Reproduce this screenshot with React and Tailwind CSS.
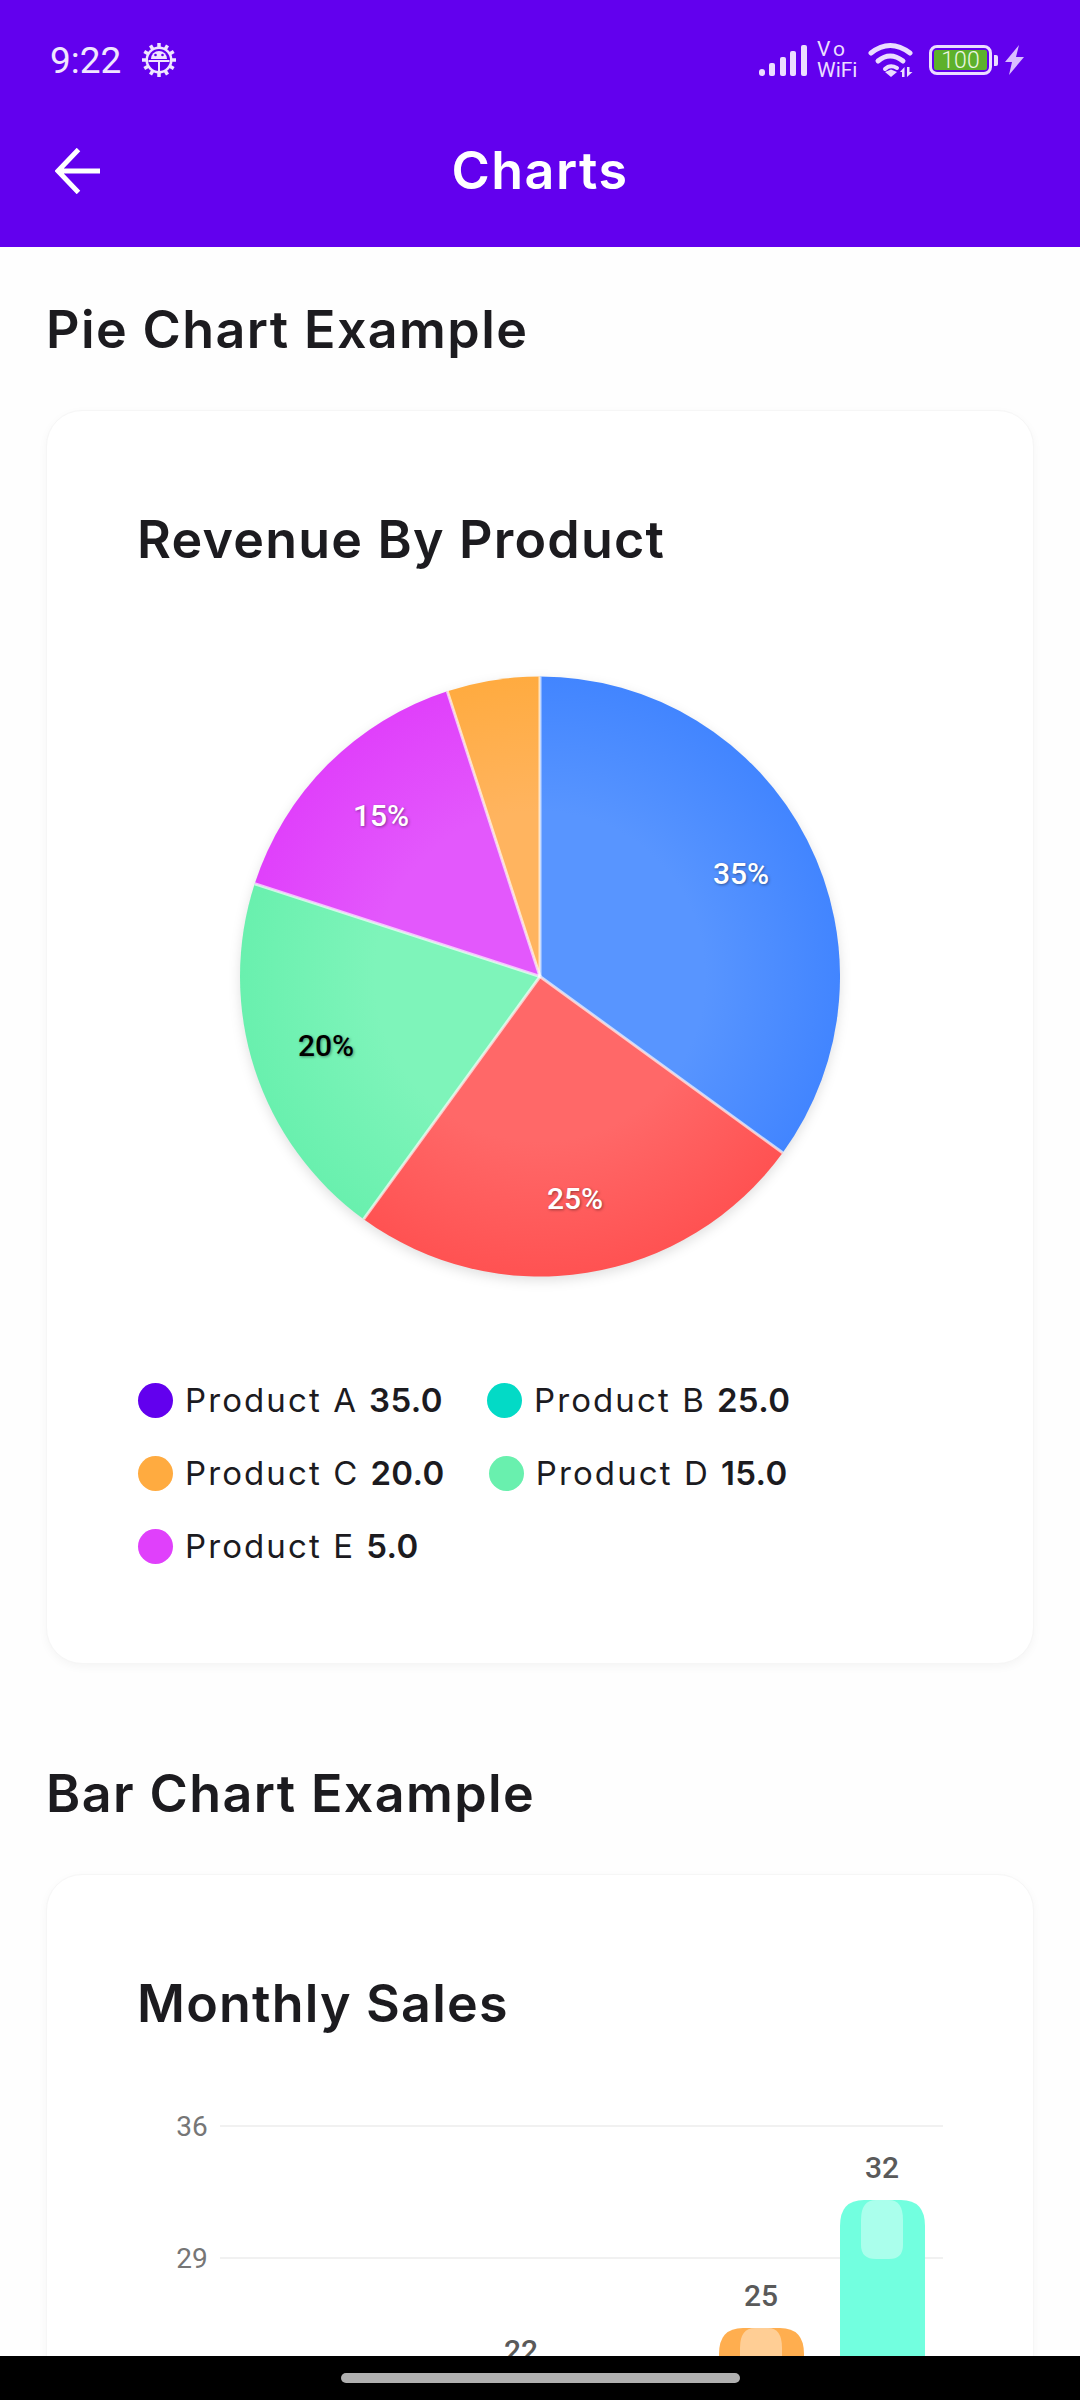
import React from 'react'

// pie geometry, same numbers as the svg viewBox below
const CX = 320
const CY = 320.5
const R = 300

const slices = [
  { id: 'blue', from: 0, to: 126, light: '#5895FF', base: '#4285FF' },
  { id: 'red', from: 126, to: 216, light: '#FF6868', base: '#FF5252' },
  { id: 'green', from: 216, to: 288, light: '#7EF4BA', base: '#69F0AE' },
  { id: 'purple', from: 288, to: 342, light: '#E358FC', base: '#E040FB' },
  { id: 'orange', from: 342, to: 360, light: '#FFB45F', base: '#FFAB40' },
]

const legend = [
  { name: 'Product A', value: '35.0', color: 'bg-[#6200EE]' },
  { name: 'Product B', value: '25.0', color: 'bg-[#03DAC6]' },
  { name: 'Product C', value: '20.0', color: 'bg-[#FFAB40]' },
  { name: 'Product D', value: '15.0', color: 'bg-[#69F0AE]' },
  { name: 'Product E', value: '5.0', color: 'bg-[#E040FB]' },
]

const point = (deg, r = R) => {
  const a = (deg * Math.PI) / 180
  return [CX + r * Math.sin(a), CY - r * Math.cos(a)]
}

const slicePath = (from, to) => {
  const [x1, y1] = point(from)
  const [x2, y2] = point(to)
  const large = to - from > 180 ? 1 : 0
  return `M${CX} ${CY} L${x1} ${y1} A${R} ${R} 0 ${large} 1 ${x2} ${y2} Z`
}

const GearIcon = () => (
  <svg width="36" height="36" viewBox="0 0 36 36" className="ml-[20px]">
    {[0, 30, 60, 90, 120, 150, 180, 210, 240, 270, 300, 330].map((deg) => (
      <rect key={deg} x="16.25" y="1" width="3.5" height="5" fill="#F0E6FF" transform={`rotate(${deg} 18 18)`} />
    ))}
    <circle cx="18" cy="18" r="13.5" fill="#F0E6FF" />
    <circle cx="18" cy="18" r="11" fill="#6200EE" />
    <path d="M10 17a8 8 0 0 1 16 0z" fill="#F0E6FF" />
    <circle cx="14.5" cy="13" r="1.3" fill="#6200EE" />
    <circle cx="21.5" cy="13" r="1.3" fill="#6200EE" />
    <path d="M7.5 19h21M18 19v10" stroke="#F0E6FF" strokeWidth="2" />
  </svg>
)

const SignalIcon = () => (
  <svg width="48" height="31" viewBox="0 0 48 31" fill="#EBDDFF">
    <rect x="0" y="24" width="6" height="7" rx="3" />
    <rect x="10" y="18" width="6" height="13" rx="2" />
    <rect x="21" y="12" width="6" height="19" rx="2" />
    <rect x="31" y="6" width="6" height="25" rx="2" />
    <rect x="42" y="0" width="6" height="31" rx="2" />
  </svg>
)

const WifiIcon = () => (
  <svg width="46" height="36" viewBox="0 0 46 36" fill="none" stroke="#EBDDFF" strokeWidth="5" strokeLinecap="round">
    <path d="M3 11Q22 -4 42 11" />
    <path d="M10 19Q22 9 35 19" />
    <path d="M17 27Q22 22 29 26" strokeWidth="4" />
    <path d="M17 30l6-2.500 6 2.500-6 5z" fill="#EBDDFF" stroke="none" />
    <path d="M32 30l4.500-5v10h-2.500v-5zM39 25h2.500v5h3l-5.500 5z" fill="#EBDDFF" stroke="none" />
  </svg>
)

const Battery = () => (
  <div className="flex items-center">
    <div className="w-[63px] h-[30px] rounded-[8px] border-[3px] border-[#EBDDFF] p-[2px] flex">
      <div className="flex-1 bg-[#5DB12B] rounded-[2px] flex items-center justify-center text-[23px] leading-none text-[#EDF7E4] font-['Roboto',sans-serif] font-light">
        100
      </div>
    </div>
    <div className="w-[4px] h-[11px] ml-[2px] rounded-r-[2px] bg-[#EBDDFF]"></div>
  </div>
)

const BoltIcon = () => (
  <svg width="19" height="30" viewBox="0 0 19 30" fill="#D9BEFF" className="ml-[7px]">
    <path d="M14 0L0 17h7L4 30 19 12h-8z" />
  </svg>
)

const StatusBar = () => (
  <div className="h-[120px] flex items-center justify-between pl-[50px] pr-[56px]">
    <div className="flex items-center">
      <span className="text-[37px] leading-none text-[#F0E6FF] font-['Roboto',sans-serif]">9:22</span>
      <GearIcon />
    </div>
    <div className="flex items-center">
      <SignalIcon />
      <div className="ml-[10px] mr-[11px] w-[40px] flex flex-col text-[21px] leading-[21px] text-[#EBDDFF] font-['Roboto',sans-serif]">
        <span className="tracking-[3px]">Vo</span>
        <span>WiFi</span>
      </div>
      <WifiIcon />
      <div className="ml-[15px]">
        <Battery />
      </div>
      <BoltIcon />
    </div>
  </div>
)

const AppBar = () => (
  <div className="h-[102px] grid grid-cols-[120px_1fr_120px] items-center">
    <svg width="45" height="46" viewBox="0 0 46 46" fill="none" stroke="#fff" strokeWidth="5" className="ml-[55px]">
      <path d="M46 23H4M24 1L3 23l21 22" />
    </svg>
    <h1 className="text-center text-[52px] leading-none font-[580] text-white tracking-[1.5px]">Charts</h1>
  </div>
)

const SectionTitle = ({ children }) => (
  <h2 className="h-[80px] px-[46px] text-[52px] leading-[80px] font-[580] tracking-[1.4px] text-[#1C1B1F]">{children}</h2>
)

const Card = ({ title, children }) => (
  <div className="mx-[46px] mt-[40px] rounded-[36px] bg-white border border-[#F6F6F6] shadow-[0_3px_10px_rgba(0,0,0,0.04)]">
    <h3 className="pt-[89px] pl-[90px] h-[169px] text-[52px] leading-[80px] font-[580] tracking-[1.2px] text-[#1C1B1F]">{title}</h3>
    {children}
  </div>
)

const PieChart = () => (
  <div className="relative w-[640px] h-[641px] mx-auto mt-[76px]">
    <svg width="640" height="641" viewBox="0 0 640 641" className="block drop-shadow-[0_4px_6px_rgba(0,0,0,0.12)]">
      <defs>
        {slices.map((s) => (
          <radialGradient key={s.id} id={s.id} gradientUnits="userSpaceOnUse" cx={CX} cy={CY} r={R}>
            <stop offset="0" stopColor={s.light} />
            <stop offset="0.55" stopColor={s.light} />
            <stop offset="1" stopColor={s.base} />
          </radialGradient>
        ))}
      </defs>
      {slices.map((s) => (
        <path key={s.id} d={slicePath(s.from, s.to)} fill={`url(#${s.id})`} />
      ))}
      {slices.map((s) => {
        const [x, y] = point(s.from)
        return <line key={s.id} x1={CX} y1={CY} x2={x} y2={y} stroke="#fff" strokeOpacity="0.65" strokeWidth="3" />
      })}
    </svg>
    <span className="absolute left-[521px] top-[218px] -translate-x-1/2 -translate-y-1/2 text-[30px] leading-none font-medium text-white font-['Roboto',sans-serif] [text-shadow:1px_1px_3px_rgba(0,0,0,0.4)]">35%</span>
    <span className="absolute left-[161px] top-[160px] -translate-x-1/2 -translate-y-1/2 text-[30px] leading-none font-medium text-white font-['Roboto',sans-serif] [text-shadow:1px_1px_3px_rgba(0,0,0,0.4)]">15%</span>
    <span className="absolute left-[106px] top-[390px] -translate-x-1/2 -translate-y-1/2 text-[30px] leading-none font-medium text-black font-['Roboto',sans-serif] [text-shadow:1px_1px_3px_rgba(0,0,0,0.4)]">20%</span>
    <span className="absolute left-[355px] top-[543px] -translate-x-1/2 -translate-y-1/2 text-[30px] leading-none font-medium text-white font-['Roboto',sans-serif] [text-shadow:1px_1px_3px_rgba(0,0,0,0.4)]">25%</span>
  </div>
)

const Legend = () => (
  <div className="mt-[67px] pl-[91px] pb-[80px] flex flex-wrap gap-x-[44px] w-[900px]">
    {legend.map((item) => (
      <div key={item.name} className="h-[73px] flex items-center">
        <span className={`w-[35px] h-[35px] rounded-full ${item.color}`}></span>
        <span className="ml-[12px] text-[33px] tracking-[2.1px] text-[#1C1B1F]">{item.name}</span>
        <span className="ml-[11px] text-[33px] font-semibold tracking-[0.4px] text-[#1C1B1F]">{item.value}</span>
      </div>
    ))}
  </div>
)

const Bar = ({ x, top, color, value }) => (
  <g>
    <text x={x + 42} y={top - 22} textAnchor="middle" fontSize="30" fontWeight="500" fill="#5A5A5A" fontFamily="Roboto, sans-serif">
      {value}
    </text>
    <path d={`M${x} 400V${top + 26}Q${x} ${top} ${x + 24} ${top}H${x + 61}Q${x + 85} ${top} ${x + 85} ${top + 26}V400Z`} fill={color} />
    <path d={`M${x + 21} ${top + 45}V${top + 20}Q${x + 21} ${top} ${x + 36} ${top}H${x + 49}Q${x + 63} ${top} ${x + 63} ${top + 20}V${top + 45}Q${x + 63} ${top + 59} ${x + 49} ${top + 59}H${x + 36}Q${x + 21} ${top + 59} ${x + 21} ${top + 45}Z`} fill="#fff" fillOpacity="0.4" />
  </g>
)

// coordinates are relative to the card's left edge and the top of the chart area
const BarChart = () => (
  <svg width="986" height="400" viewBox="0 0 986 400" className="block mt-[56px]">
    <g fontSize="28" fill="#767676" fontFamily="Roboto, sans-serif" textAnchor="middle">
      <text x="145" y="36">36</text>
      <text x="145" y="168">29</text>
    </g>
    <line x1="173" y1="26" x2="896" y2="26" stroke="#F1F1F1" strokeWidth="2" />
    <line x1="173" y1="158" x2="896" y2="158" stroke="#F1F1F1" strokeWidth="2" />
    <text x="474" y="261" textAnchor="middle" fontSize="30" fontWeight="500" fill="#5A5A5A" fontFamily="Roboto, sans-serif">22</text>
    <Bar x={672} top={228} color="#FFAE4F" value="25" />
    <Bar x={793} top={100} color="#72FFDF" value="32" />
  </svg>
)

export default function App() {
  return (
    <div className="h-[2400px] w-[1080px] flex flex-col overflow-hidden bg-[#FEFEFE] font-['Inter',sans-serif]">
      <header className="h-[247px] shrink-0 bg-[#6200EE]">
        <StatusBar />
        <AppBar />
      </header>

      <main className="flex-1 min-h-0 overflow-hidden pt-[43px]">
        <SectionTitle>Pie Chart Example</SectionTitle>
        <Card title="Revenue By Product">
          <PieChart />
          <Legend />
        </Card>

        <div className="mt-[90px]">
          <SectionTitle>Bar Chart Example</SectionTitle>
        </div>
        <Card title="Monthly Sales">
          <BarChart />
        </Card>
      </main>

      <div className="h-[44px] shrink-0 bg-black flex items-center justify-center">
        <div className="w-[399px] h-[10px] rounded-full bg-[#B0B0B0]"></div>
      </div>
    </div>
  )
}
